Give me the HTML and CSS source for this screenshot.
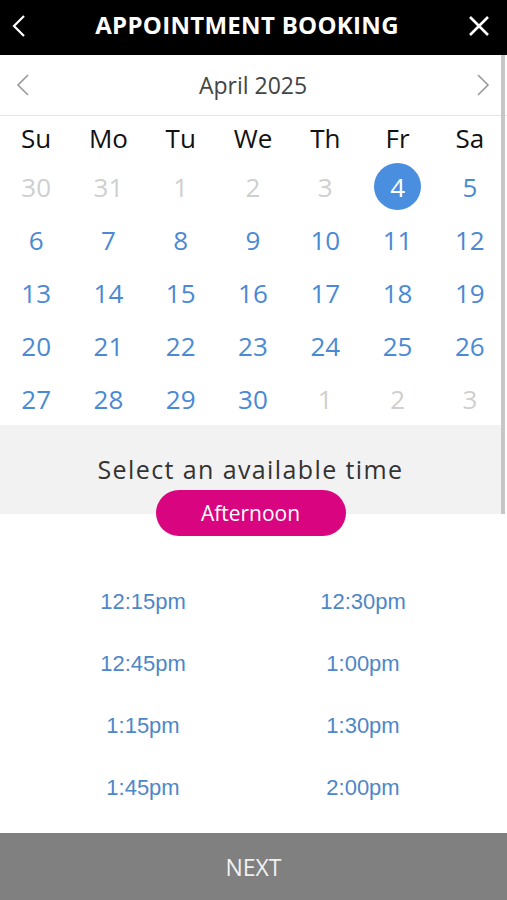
FILE: index.html
```html
<!DOCTYPE html>
<html lang="en">
<head>
    <meta charset="UTF-8">
    <meta name="viewport" content="width=device-width, initial-scale=1.0">
    <title>Appointment Booking</title>
    <link rel="stylesheet" href="styles.css">
</head>
<body>

    <div class="app">
        <!-- Top bar -->
        <div class="topbar">
            <svg class="top-icon" width="14" height="24" viewBox="0 0 14 24">
                <path d="M12 2 L2 12 L12 22" fill="none" stroke="#fff" stroke-width="2.2"/>
            </svg>
            <h1>APPOINTMENT BOOKING</h1>
            <svg class="top-icon" width="22" height="22" viewBox="0 0 22 22">
                <path d="M2 2 L20 20 M20 2 L2 20" fill="none" stroke="#fff" stroke-width="2.6"/>
            </svg>
        </div>

        <div class="scroll-area">
            <!-- Month selector -->
            <div class="month-bar">
                <svg width="14" height="22" viewBox="0 0 14 22">
                    <path d="M12 1 L2 11 L12 21" fill="none" stroke="#999" stroke-width="1.6"/>
                </svg>
                <span class="month-name">April 2025</span>
                <svg width="14" height="22" viewBox="0 0 14 22">
                    <path d="M2 1 L12 11 L2 21" fill="none" stroke="#999" stroke-width="1.6"/>
                </svg>
            </div>

            <div class="calendar" id="calendar"></div>

            <div class="time-header">
                <p>Select an available time</p>
                <button class="period-btn">Afternoon</button>
            </div>

            <div class="slots" id="slots"></div>

            <div class="scrollbar"></div>
        </div>

        <button class="next-btn">NEXT</button>
    </div>

    <script>
        const days = ['Su', 'Mo', 'Tu', 'We', 'Th', 'Fr', 'Sa'];
        const calendar = document.getElementById('calendar');

        days.forEach(d => {
            const el = document.createElement('div');
            el.className = 'weekday';
            el.textContent = d;
            calendar.appendChild(el);
        });

        // March 30 .. May 3
        const cells = [30, 31];
        for (let i = 1; i <= 30; i++) cells.push(i);
        cells.push(1, 2, 3);

        cells.forEach((n, i) => {
            const el = document.createElement('div');
            el.className = 'day';
            const inMonth = i >= 2 && i < 32;
            const past = i < 7;
            if (!inMonth || (past && n < 4)) el.classList.add('muted');
            if (inMonth && n === 4) el.classList.add('selected');
            el.innerHTML = `<span>${n}</span>`;
            calendar.appendChild(el);
        });

        const times = ['12:15pm', '12:30pm', '12:45pm', '1:00pm', '1:15pm', '1:30pm', '1:45pm', '2:00pm'];
        const slots = document.getElementById('slots');
        times.forEach(t => {
            const el = document.createElement('div');
            el.className = 'slot';
            el.textContent = t;
            slots.appendChild(el);
        });
    </script>

</body>
</html>
```

FILE: styles.css
```css
* {
    box-sizing: border-box;
}

body {
    margin: 0;
    font-family: "Open Sans", "DejaVu Sans", sans-serif;
    background-color: #fff;
}

.app {
    display: flex;
    flex-direction: column;
    height: 900px;
}

/* Top bar */
.topbar {
    height: 55px;
    background-color: #000;
    display: flex;
    align-items: center;
    justify-content: space-between;
    padding: 0 17px 4px 12px;
}

.topbar h1 {
    margin: 0 0 2px;
    color: #fff;
    font-size: 24px;
    font-weight: 700;
    letter-spacing: 0.3px;
}

.top-icon {
    display: block;
}

.scroll-area {
    flex: 1;
    position: relative;
}

/* Month selector */
.month-bar {
    height: 61px;
    display: flex;
    align-items: center;
    justify-content: space-between;
    padding: 0 17px 0 16px;
    border-bottom: 1px solid #e6e6e6;
}

.month-name {
    font-size: 23px;
    color: #444;
}

/* Calendar grid */
.calendar {
    width: 506px;
    display: grid;
    grid-template-columns: repeat(7, 1fr);
    grid-template-rows: 44px repeat(5, 53px);
}

.weekday {
    display: flex;
    align-items: center;
    justify-content: center;
    font-size: 26px;
    color: #111;
}

.day {
    display: flex;
    align-items: center;
    justify-content: center;
    font-size: 26px;
    color: #4a89d4;
}

.day span {
    width: 47px;
    height: 47px;
    border-radius: 50%;
    display: flex;
    align-items: center;
    justify-content: center;
}

.day.muted {
    color: #cfcfcf;
}

.day.selected span {
    background-color: #4a8ee0;
    color: #fff;
}

/* Time header */
.time-header {
    display: flow-root;
    width: 501px;
    background-color: #f2f2f2;
    text-align: center;
    padding-top: 27px;
}

.time-header p {
    margin: 0;
    font-size: 25px;
    line-height: 34px;
    letter-spacing: 1.4px;
    color: #333;
}

.period-btn {
    display: block;
    position: relative;
    margin: 4px auto -22px;
    width: 190px;
    height: 46px;
    border: none;
    border-radius: 23px;
    background-color: #d9047f;
    color: #fff;
    font-family: "Open Sans", sans-serif;
    font-size: 21px;
    cursor: pointer;
}

/* Time slots */
.slots {
    display: grid;
    grid-template-columns: 220px 220px;
    grid-auto-rows: 62px;
    padding: 57px 0 0 33px;
}

.slot {
    display: flex;
    align-items: center;
    justify-content: center;
    font-family: "Liberation Sans", Arial, sans-serif;
    font-size: 22px;
    color: #4d87c8;
}

.scrollbar {
    position: absolute;
    top: 0;
    right: 2px;
    width: 4px;
    height: 459px;
    background-color: #c6c6c6;
}

/* Bottom button */
.next-btn {
    height: 67px;
    border: none;
    background-color: #808080;
    color: #f0f0f0;
    font-family: "Open Sans", sans-serif;
    font-size: 23px;
    cursor: pointer;
}
```
